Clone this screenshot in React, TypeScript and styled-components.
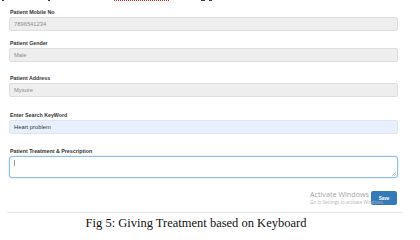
import styled, { createGlobalStyle } from "styled-components";

const GlobalStyle = createGlobalStyle`
  html, body {
    margin: 0;
    padding: 0;
    background: #ffffff;
  }
  body {
    width: 420px;
    height: 240px;
    overflow: hidden;
    font-family: "Liberation Sans", Arial, sans-serif;
  }
`;

const Page = styled.div`
  width: 420px;
  height: 240px;
  display: flex;
  flex-direction: column;
`;

const CutLine = styled.div`
  height: 2px;
  display: flex;
  align-items: flex-start;
  padding-left: 2px;
  gap: 4px;
`;

const Tick = styled.span<{ $w: number; $red?: boolean; $ml?: number }>`
  display: block;
  width: ${(p) => p.$w}px;
  height: 1px;
  margin-left: ${(p) => p.$ml ?? 0}px;
  ${(p) =>
    p.$red
      ? "border-top: 1px dotted #e0201c;"
      : "background: #3a3a3a;"}
`;

const Form = styled.form`
  padding: 7px 22px 0 9px;
  display: flex;
  flex-direction: column;
`;

const Group = styled.div<{ $top: number }>`
  margin-top: ${(p) => p.$top}px;
  display: flex;
  flex-direction: column;
`;

const Label = styled.label`
  font-size: 5.3px;
  line-height: 6px;
  font-weight: 700;
  color: #333333;
  margin-bottom: 2px;
  padding-left: 1px;
`;

const Field = styled.div<{ $variant?: "readonly" | "filled" }>`
  height: 14px;
  box-sizing: border-box;
  border: 1px solid ${(p) => (p.$variant === "filled" ? "#dde5f0" : "#dedede")};
  border-radius: 2px;
  background: ${(p) => (p.$variant === "filled" ? "#e8f0fe" : "#eeeeee")};
  color: ${(p) => (p.$variant === "filled" ? "#333333" : "#8c8c8c")};
  font-size: 5.8px;
  line-height: 12px;
  padding-left: 4px;
`;

const TextArea = styled.div`
  position: relative;
  height: 22px;
  box-sizing: border-box;
  border: 1px solid #8ebde8;
  border-radius: 3px;
  box-shadow: 0 0 2px rgba(102, 175, 233, 0.5);
  background: #ffffff;
  padding: 3px 0 0 4px;
`;

const Caret = styled.span`
  display: block;
  width: 1px;
  height: 6px;
  background: #9a9a9a;
`;

const Grip = styled.svg`
  position: absolute;
  right: 1px;
  bottom: 1px;
`;

const Footer = styled.div`
  margin-top: 13px;
  padding-right: 23px;
  display: flex;
  justify-content: flex-end;
  align-items: flex-start;
  position: relative;
  height: 15px;
`;

const Watermark = styled.div`
  position: absolute;
  left: 310px;
  top: -1px;
  color: #a9a9a9;
  font-family: "Open Sans", "DejaVu Sans", sans-serif;
  pointer-events: none;
  z-index: 1;
`;

const WmTitle = styled.div`
  font-size: 7.2px;
  line-height: 9px;
  color: #a4a4a4;
`;

const WmSub = styled.div`
  font-size: 4.5px;
  line-height: 6px;
  color: #b3b3b3;
`;

const SaveButton = styled.button`
  width: 26px;
  height: 14px;
  border: none;
  border-radius: 2px;
  background: #337ab7;
  color: #ffffff;
  font-family: "Liberation Sans", Arial, sans-serif;
  font-size: 4.6px;
  font-weight: 700;
  padding: 0;
`;

const Divider = styled.div`
  margin: 6px 17px 0 7px;
  height: 1px;
  background: #e6e6e6;
`;

const Caption = styled.div`
  margin-top: 3px;
  padding-right: 28px;
  text-align: center;
  font-family: "Liberation Serif", "Times New Roman", serif;
  font-size: 12.5px;
  line-height: 14px;
  color: #111111;
`;

export default function App() {
  return (
    <Page>
      <GlobalStyle />
      <CutLine>
        <Tick $w={2} />
        <Tick $w={2} $ml={40} />
        <Tick $w={55} $red $ml={60} />
        <Tick $w={4} $ml={28} />
        <Tick $w={3} />
      </CutLine>
      <Form>
        <Group $top={0}>
          <Label>Patient Mobile No</Label>
          <Field $variant="readonly">7896541234</Field>
        </Group>
        <Group $top={9}>
          <Label>Patient Gender</Label>
          <Field $variant="readonly">Male</Field>
        </Group>
        <Group $top={13}>
          <Label>Patient Address</Label>
          <Field $variant="readonly">Mysore</Field>
        </Group>
        <Group $top={15}>
          <Label>Enter Search KeyWord</Label>
          <Field $variant="filled">Heart problem</Field>
        </Group>
        <Group $top={14}>
          <Label>Patient Treatment &amp; Prescription</Label>
          <TextArea>
            <Caret />
            <Grip width="4" height="4" viewBox="0 0 4 4">
              <path d="M4 0 L0 4 M4 2 L2 4" stroke="#9a9a9a" strokeWidth="0.6" />
            </Grip>
          </TextArea>
        </Group>
      </Form>
      <Footer>
        <Watermark>
          <WmTitle>Activate Windows</WmTitle>
          <WmSub>Go to Settings to activate Windows.</WmSub>
        </Watermark>
        <SaveButton type="button">Save</SaveButton>
      </Footer>
      <Divider />
      <Caption>Fig 5: Giving Treatment based on Keyboard</Caption>
    </Page>
  );
}
